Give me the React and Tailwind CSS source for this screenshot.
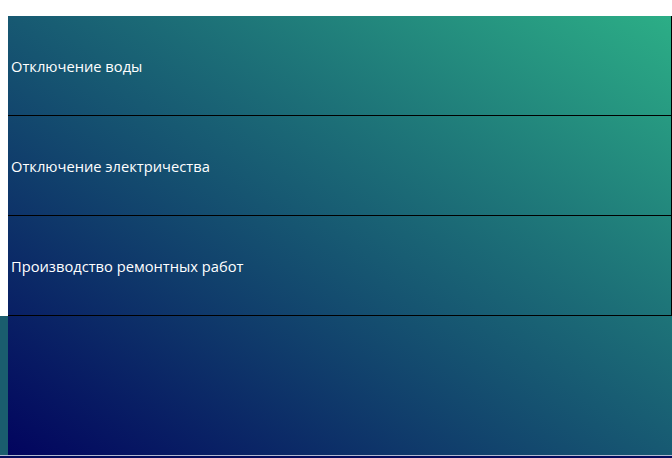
const items = ['Отключение воды', 'Отключение электричества', 'Производство ремонтных работ']

export default function App() {
  return (
    <div className="flex h-[458px] w-[672px] flex-col overflow-hidden bg-white font-['Open_Sans',sans-serif]">
      <div className="h-4 shrink-0 bg-white" />
      <div className="flex h-[439px] shrink-0">
        <div className="flex w-2 shrink-0 flex-col">
          <div className="h-[300px] bg-white" />
          <div className="flex-1 bg-[#1a5d6e]" />
        </div>
        <div className="flex-1 bg-[linear-gradient(to_top_right,#02045e,#2cae86)]">
          {items.map((t) => (
            <div
              key={t}
              className="flex h-[100px] items-center border-r border-b border-black pt-[2px] pl-[3px] text-[14.7px] text-white"
            >
              {t}
            </div>
          ))}
        </div>
      </div>
      <div className="h-px shrink-0 bg-[#b2bad0]" />
      <div className="flex-1 bg-[#040b5c]" />
    </div>
  )
}
